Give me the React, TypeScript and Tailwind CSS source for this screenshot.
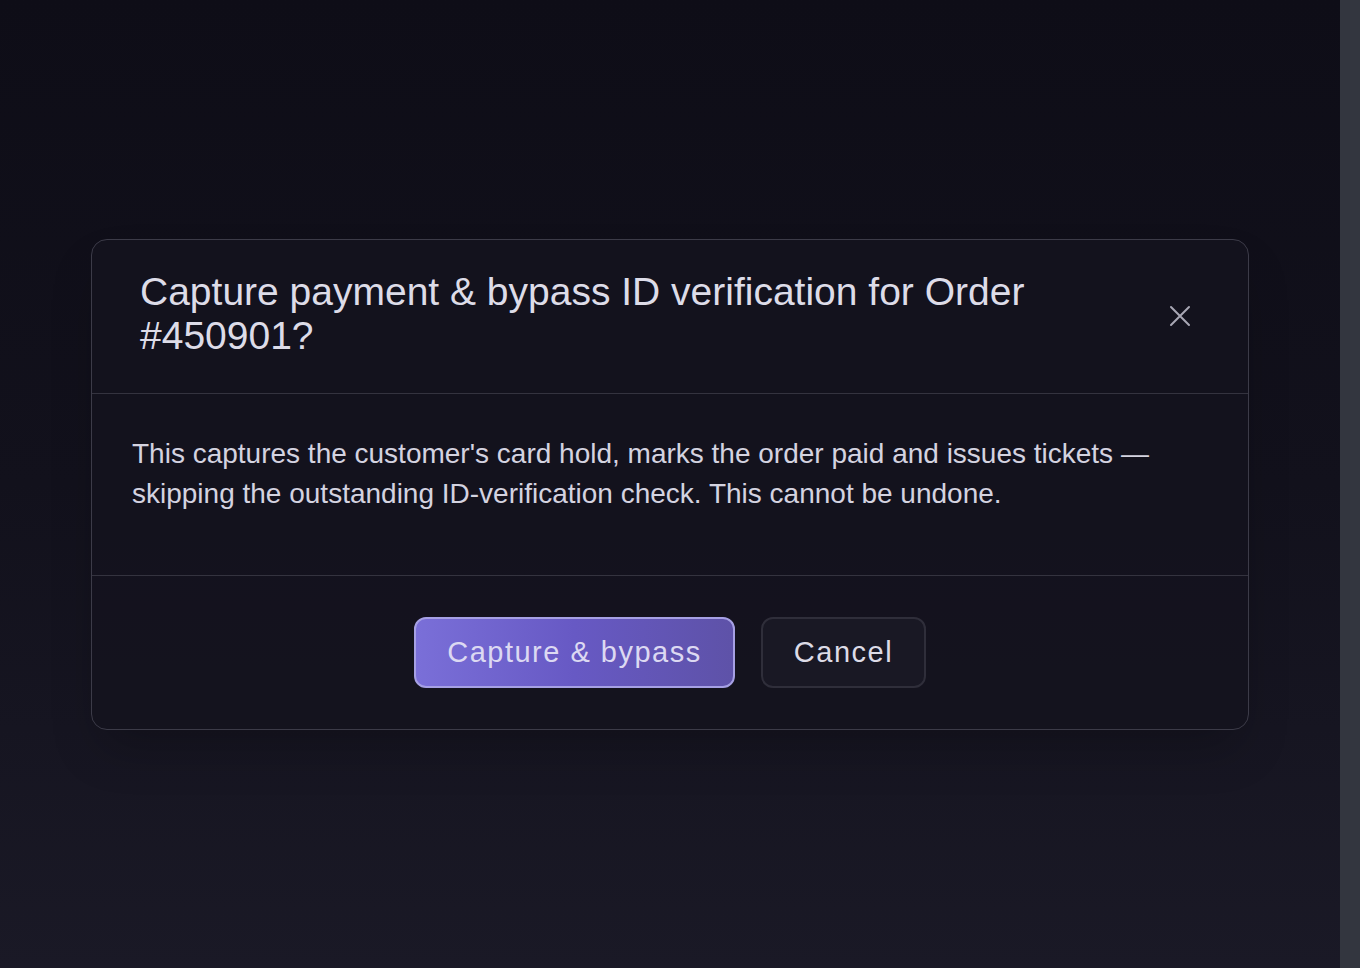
import React from 'react';

export default function App() {
  return (
    <div
      className="flex h-[968px] w-[1360px] overflow-hidden bg-gradient-to-b from-[#0e0d17] via-[#12111c] to-[#1a1926]"
      style={{ fontFamily: '"Liberation Sans", Arial, sans-serif' }}
    >
      <div className="flex flex-1 items-start justify-center pt-[239px]">
        <div className="w-[1158px] rounded-[16px] border border-[#3c3b48] bg-[#14131e]/90 shadow-2xl">
          {/* header */}
          <div className="flex items-center justify-between border-b border-[#34333f] pb-[35px] pl-[48px] pr-[52px] pt-[30px]">
            <h2 className="max-w-[960px] text-[39px] leading-[44px] text-[#dddce8]">
              Capture payment &amp; bypass ID verification for Order #450901?
            </h2>
            <button className="mt-[4px] flex h-8 w-8 items-center justify-center text-[#a8a7b4]">
              <svg width="24" height="24" viewBox="0 0 24 24" fill="none" stroke="currentColor" strokeWidth="2" strokeLinecap="round">
                <path d="M3 3l18 18M21 3L3 21" />
              </svg>
            </button>
          </div>

          {/* body */}
          <div className="border-b border-[#34333f] px-[40px] pb-[61px] pt-[40px]">
            <p className="text-[28px] leading-[40px] text-[#d4d3e0]">
              This captures the customer's card hold, marks the order paid and issues tickets — skipping the outstanding ID-verification check. This cannot be undone.
            </p>
          </div>

          {/* footer */}
          <div className="flex items-center justify-center gap-[26px] pb-[41px] pt-[41px]">
            <button className="h-[71px] w-[321px] rounded-[12px] border-2 border-[#a6a0e4] bg-gradient-to-r from-[#7a6fd8] via-[#6759c4] to-[#5e52a8] text-[29px] tracking-[1.5px] text-[#dcd9f2]">
              Capture &amp; bypass
            </button>
            <button className="h-[71px] w-[165px] rounded-[12px] border-2 border-[#2f2e3a] bg-[#191824] text-[29px] tracking-[1.5px] text-[#dcdbe6]">
              Cancel
            </button>
          </div>
        </div>
      </div>
      <div className="h-full w-[20px] bg-[#33363f]" />
    </div>
  );
}
